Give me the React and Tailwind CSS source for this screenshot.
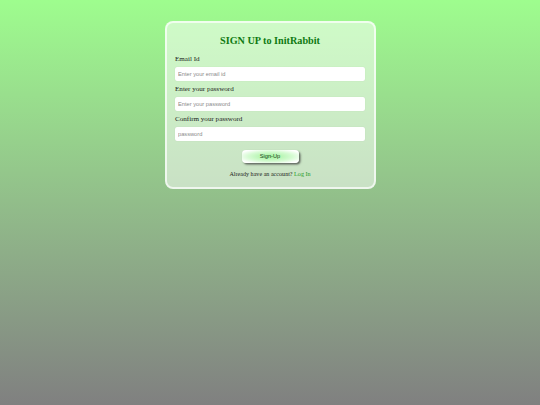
export default function App() {
  return (
    <div className="min-h-[405px] w-full bg-gradient-to-b from-[#9efd8e] to-[#808080] pt-[21px] flex justify-center items-start">
      <div className="w-[211px] rounded-[8px] border-[2px] border-white/70 bg-white/50 px-[8.5px] pt-[11.5px] pb-[7.5px] flex flex-col">
        <h2 className="text-center text-[10.2px] leading-[12px] font-bold text-[#0e7a12] font-['Liberation_Serif',serif]">
          SIGN UP to InitRabbit
        </h2>
        <label className="mt-[7px] h-[10px] leading-[10px] text-[7.1px] text-[#1a221a] font-['Liberation_Serif',serif]">Email Id</label>
        <input
          className="mt-[3px] h-[14px] w-full rounded-[2px] bg-white px-[3px] text-[5.7px] font-['Liberation_Sans',sans-serif] outline-none placeholder:text-[#8a8a8a] shadow-[0_0_1px_rgba(0,0,0,0.15)]"
          placeholder="Enter your email id"
        />
        <label className="mt-[3px] h-[10px] leading-[10px] text-[7.1px] text-[#1a221a] font-['Liberation_Serif',serif]">Enter your password</label>
        <input
          type="password"
          className="mt-[3px] h-[14px] w-full rounded-[2px] bg-white px-[3px] text-[5.7px] font-['Liberation_Sans',sans-serif] outline-none placeholder:text-[#8a8a8a] shadow-[0_0_1px_rgba(0,0,0,0.15)]"
          placeholder="Enter your password"
        />
        <label className="mt-[3px] h-[10px] leading-[10px] text-[7.1px] text-[#1a221a] font-['Liberation_Serif',serif]">Confirm your password</label>
        <input
          type="password"
          className="mt-[3px] h-[14px] w-full rounded-[2px] bg-white px-[3px] text-[5.7px] font-['Liberation_Sans',sans-serif] outline-none placeholder:text-[#8a8a8a] shadow-[0_0_1px_rgba(0,0,0,0.15)]"
          placeholder="password"
        />
        <div className="mt-[9px] flex justify-center">
          <button className="h-[13.5px] w-[57px] rounded-[4px] bg-[radial-gradient(ellipse_at_center,#9ff29a_0%,#d6fbd3_55%,#ffffff_85%)] text-[5.7px] text-[#17421a] font-['Liberation_Sans',sans-serif] shadow-[1.5px_1.5px_2px_rgba(60,60,60,0.75)]">
            Sign-Up
          </button>
        </div>
        <p className="mt-[6px] h-[10px] leading-[10px] text-center text-[6.1px] text-[#1a221a] font-['Liberation_Serif',serif]">
          Already have an account? <a className="text-[#1f9a1f]">Log In</a>
        </p>
      </div>
    </div>
  );
}
